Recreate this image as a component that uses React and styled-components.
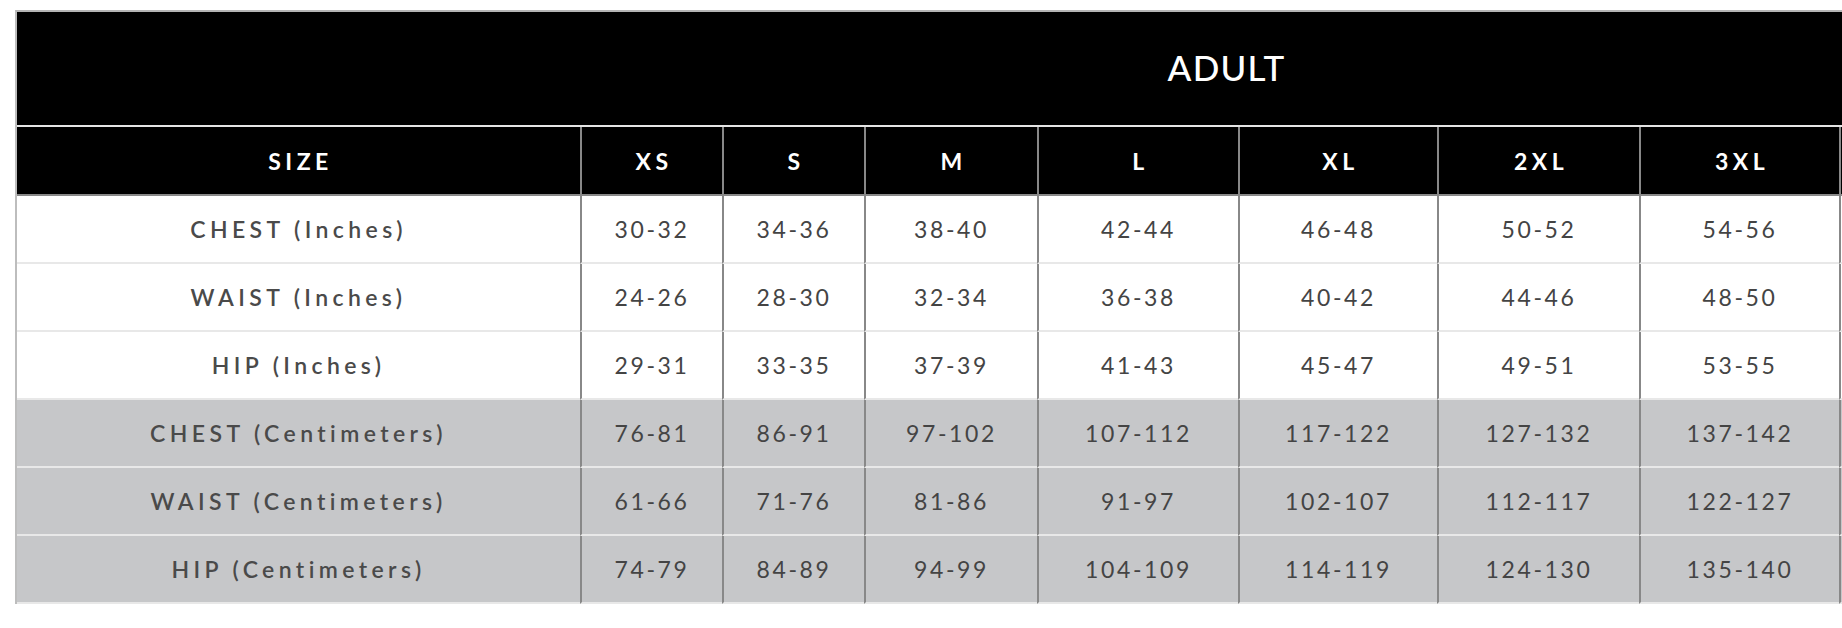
import React from 'react';
import styled, { createGlobalStyle } from 'styled-components';

const sizes = ['XS', 'S', 'M', 'L', 'XL', '2XL', '3XL'];

const rows = [
  { label: 'CHEST (Inches)', values: ['30-32', '34-36', '38-40', '42-44', '46-48', '50-52', '54-56'] },
  { label: 'WAIST (Inches)', values: ['24-26', '28-30', '32-34', '36-38', '40-42', '44-46', '48-50'] },
  { label: 'HIP (Inches)', values: ['29-31', '33-35', '37-39', '41-43', '45-47', '49-51', '53-55'] },
  { label: 'CHEST (Centimeters)', metric: true, values: ['76-81', '86-91', '97-102', '107-112', '117-122', '127-132', '137-142'] },
  { label: 'WAIST (Centimeters)', metric: true, values: ['61-66', '71-76', '81-86', '91-97', '102-107', '112-117', '122-127'] },
  { label: 'HIP (Centimeters)', metric: true, values: ['74-79', '84-89', '94-99', '104-109', '114-119', '124-130', '135-140'] },
];

const App = () => (
  <>
    <GlobalStyle />
    <Page>
      <Table>
        <TitleBar>ADULT</TitleBar>
        <HeaderRow>
          <HeadCell $first>SIZE</HeadCell>
          {sizes.map((s) => (
            <HeadCell key={s}>{s}</HeadCell>
          ))}
          <HeadCell />
        </HeaderRow>
        {rows.map((row) => (
          <Row key={row.label} $metric={row.metric}>
            <LabelCell>{row.label}</LabelCell>
            {row.values.map((v, i) => (
              <ValueCell key={i}>{v}</ValueCell>
            ))}
            <ValueCell />
          </Row>
        ))}
      </Table>
    </Page>
  </>
);

export default App;

const GlobalStyle = createGlobalStyle`
  body {
    margin: 0;
    background: #ffffff;
    overflow: hidden;
    font-family: Lato, "Open Sans", sans-serif;
  }
`;

const Page = styled.div`
  padding: 10px 0 0 15px;
  width: 2500px;
`;

const Table = styled.div`
  width: 2419px;
  border-left: 2px solid #bdbdbd;
  border-top: 2px solid #b4b4b4;
`;

const TitleBar = styled.div`
  height: 115px;
  box-sizing: border-box;
  padding-bottom: 3px;
  background: #000;
  border-bottom: 2px solid #e4e4e4;
  display: flex;
  align-items: center;
  justify-content: center;
  color: #fff;
  font-size: 35px;
  font-weight: 500;
  letter-spacing: 1.2px;
`;

const gridCols = `
  display: grid;
  grid-template-columns: 563px 142px 142px 173px 201px 199px 202px 200px 1fr;
`;

const HeaderRow = styled.div`
  ${gridCols}
  height: 69px;
  background: #000;
`;

const HeadCell = styled.div`
  display: flex;
  align-items: center;
  justify-content: center;
  border-left: ${(p) => (p.$first ? 'none' : '2px solid #888')};
  border-bottom: 2px solid #888;
  color: #fff;
  font-size: 23px;
  font-weight: 700;
  letter-spacing: 4.5px;
  padding-left: 4px;
`;

const Row = styled.div`
  ${gridCols}
  height: 68px;
  background: ${(p) => (p.$metric ? '#c6c7c9' : '#fff')};
`;

const LabelCell = styled.div`
  display: flex;
  align-items: center;
  justify-content: center;
  border-bottom: 2px solid #e8e8e8;
  color: #4a4a4a;
  font-size: 23px;
  font-weight: 600;
  letter-spacing: 4.4px;
`;

const ValueCell = styled.div`
  display: flex;
  align-items: center;
  justify-content: center;
  border-left: 2px solid #888;
  border-bottom: 2px solid #e8e8e8;
  color: #444;
  font-size: 23px;
  font-weight: 400;
  letter-spacing: 2.6px;
  font-variant-numeric: tabular-nums;
`;
